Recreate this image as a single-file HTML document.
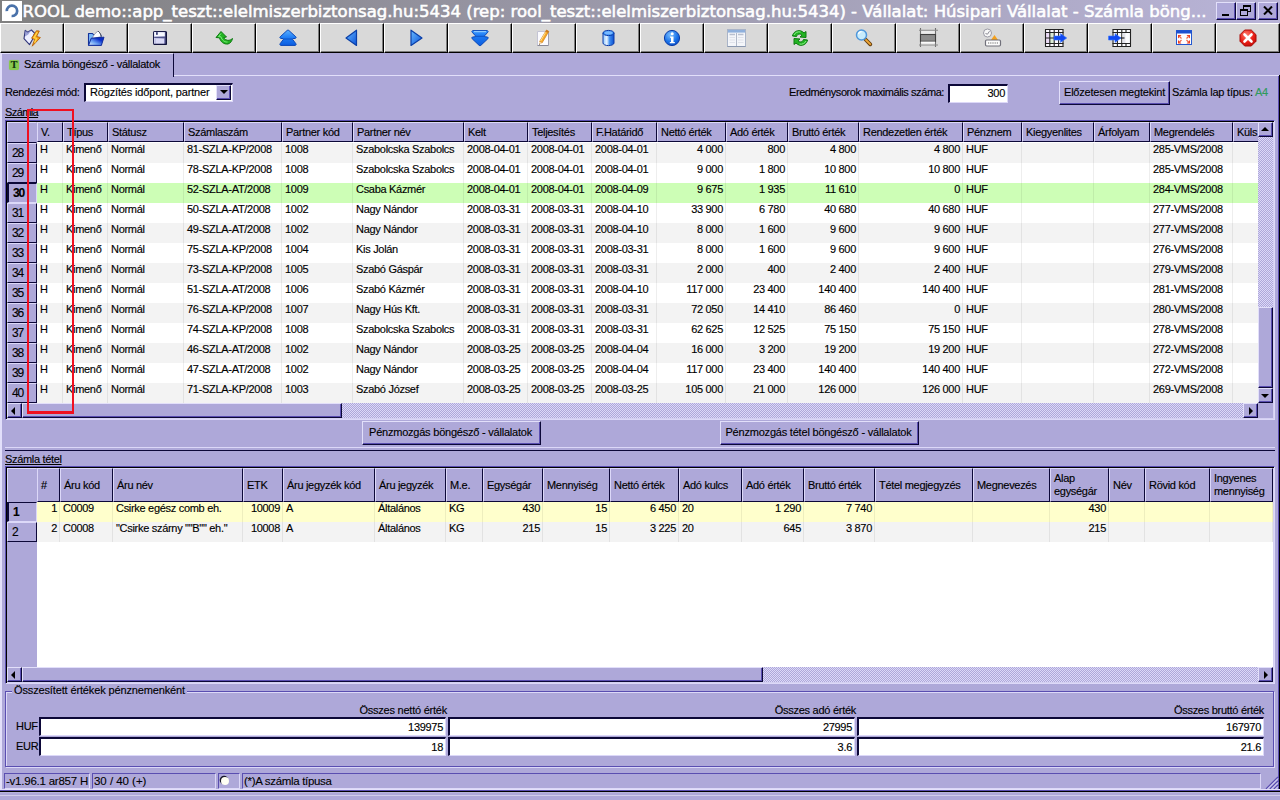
<!DOCTYPE html>
<html lang="hu"><head><meta charset="utf-8"><title>ROOL demo - Számla böngésző</title>
<style>
html,body{margin:0;padding:0}
body{width:1280px;height:800px;overflow:hidden;background:#aea8d9;font:11px "Liberation Sans",sans-serif;letter-spacing:-0.3px;color:#000;position:relative;-webkit-text-stroke-width:0.14px}
div,span{box-sizing:border-box}
.a{position:absolute;white-space:nowrap}
.t{position:absolute;white-space:nowrap;line-height:13px;height:13px}
#title{left:0;top:0;width:1280px;height:23px;background:linear-gradient(90deg,#808080 0,#b9b4d8 100%)}
#ttext{left:22.5px;top:-0.5px;color:#fff;-webkit-text-stroke-width:0.55px;font:16.5px "DejaVu Sans","Liberation Sans",sans-serif;letter-spacing:0;line-height:23px}
.tb{top:23px;width:64px;height:30px;background:#d9d9d9;border-top:1px solid #fff;border-left:1px solid #fff;border-right:1px solid #000;border-bottom:1px solid #000;box-shadow:inset -1px -1px 0 #7c7c7c}
.tb svg{position:absolute;left:22px;top:4px;width:20px;height:20px}
.cb{top:2px;width:20px;height:18px;background:#aea8d9;border-top:1px solid #e2dffa;border-left:1px solid #e2dffa;border-right:1px solid #0c0838;border-bottom:1px solid #0c0838;box-shadow:inset -1px -1px 0 #5a4eb1}
.btn{background:#aea8d9;border-top:1px solid #e2dffa;border-left:1px solid #e2dffa;border-right:1px solid #0c0838;border-bottom:1px solid #0c0838;box-shadow:inset -1px -1px 0 #5a4eb1;text-align:center}
.sunk{border-top:1px solid #5a4eb1;border-left:1px solid #5a4eb1;border-right:1px solid #dcd8f8;border-bottom:1px solid #dcd8f8}
.grid{border-top:2px solid #0c0838;border-left:2px solid #0c0838;border-right:1px solid #dcd8f8;border-bottom:1px solid #dcd8f8;border-top-color:#0c0838}
.hc{background:#aea8d9;border-left:1px solid #dcd8f8;border-top:1px solid #dcd8f8;border-right:1px solid #0c0838;border-bottom:1px solid #0c0838;overflow:hidden}
.hc span{position:absolute;left:3px;white-space:nowrap;line-height:13px}
.rh{left:7px;width:30px;height:20px;background:#aea8d9;border-left:1px solid #dcd8f8;border-top:1px solid #dcd8f8;border-right:1px solid #0c0838;border-bottom:1px solid #0c0838;font-size:12px;letter-spacing:-1.1px;line-height:14px;padding:2px 0 0 4px}
.rh.sel{font-weight:bold;border-left:2px solid #0c0838;border-top:1px solid #0c0838;border-right:1px solid #dcd8f8;border-bottom:1px solid #dcd8f8;padding-left:4px}
.row{left:37px;height:20px}
.c{position:absolute;top:0;height:20px;line-height:13px;padding:0 2px 0 3px;white-space:nowrap;overflow:hidden;border-right:1px solid rgba(0,0,0,.065)}
.r{text-align:right}
.chk{background-image:repeating-conic-gradient(#aea8d9 0% 25%,#dcd8f8 0% 50%);background-size:2px 2px}
.sbb{background:#aea8d9;border-top:1px solid #e2dffa;border-left:1px solid #e2dffa;border-right:1px solid #0c0838;border-bottom:1px solid #0c0838;box-shadow:inset -1px -1px 0 #5a4eb1}
.inp{background:#fff;height:19px;border-top:2px solid #0c0838;border-left:2px solid #0c0838;border-right:1px solid #dcd8f8;border-bottom:1px solid #dcd8f8;text-align:right;line-height:13px;padding:2px 2px 0 0}
.sp{top:773px;height:16px;border-top:1px solid #5a4eb1;border-left:1px solid #5a4eb1;border-right:1px solid #dcd8f8;border-bottom:1px solid #dcd8f8;font:11.5px "Liberation Sans",sans-serif;line-height:14px;padding-left:1px;overflow:hidden;-webkit-text-stroke-width:0.1px}
.arr{position:absolute;width:0;height:0;border:4px solid transparent}
</style></head>
<body>
<div id="title" class="a"></div>
<div class="a" style="left:2px;top:1px;width:20px;height:20px;background:#fff"><svg width="20" height="20" viewBox="0 0 20 20"><path d="M4.8 10.2 A5.2 5.2 0 1 1 9.6 15" fill="none" stroke="#4a72aa" stroke-width="2.7"/></svg></div>
<div id="ttext" class="a">ROOL demo::app_teszt::elelmiszerbiztonsag.hu:5434 (rep: rool_teszt::elelmiszerbiztonsag.hu:5434) - Vállalat: Húsipari Vállalat - Számla böng...</div>
<div class="a cb" style="left:1216px"><div class="a" style="left:5px;top:11px;width:7px;height:2px;background:#000"></div></div>
<div class="a cb" style="left:1236px"><div class="a" style="left:6px;top:2px;width:8px;height:7px;border:1px solid #000;border-top-width:2px"></div><div class="a" style="left:3px;top:6px;width:8px;height:7px;border:1px solid #000;border-top-width:2px;background:#aea8d9"></div></div>
<div class="a cb" style="left:1258px"><svg class="a" style="left:4px;top:3px" width="10" height="9" viewBox="0 0 10 9"><path d="M1 0.5 L9 8.5 M9 0.5 L1 8.5" stroke="#000" stroke-width="2"/></svg></div>
<div class="a tb" style="left:0px"><svg viewBox="0 0 20 20"><path d="M1 10.6 L2.2 2.4 L4.6 4.3 L8.4 2 L11.6 5.2 L9.2 12 L6.5 16.6 Z" fill="#eceeff" stroke="#30367a" stroke-width="1.1" stroke-linejoin="round"/><path d="M2.2 2.4 L4.6 4.3 L8.4 2 L5.2 6.5 L2 8.5Z" fill="#7f86c8" opacity=".75"/><path d="M13.4 2.8 L16.3 3 L13.6 8.4 L17.4 9.6 L9.2 18.2 L11.6 11.6 L8.6 10.2 Z" fill="#f59c12" stroke="#b86208" stroke-width=".9" stroke-linejoin="round"/><path d="M14.3 4.2 L11 9.6 L13.6 10.4 L11.6 14.6" fill="none" stroke="#ffd84a" stroke-width="1.3"/></svg></div>
<div class="a tb" style="left:64px"><svg viewBox="0 0 20 20"><defs><linearGradient id="gf" x1="0" y1="1" x2="1" y2="0"><stop offset="0" stop-color="#e4f2ff"/><stop offset=".35" stop-color="#6ea6f4"/><stop offset=".7" stop-color="#0c30cc"/><stop offset="1" stop-color="#0a28b4"/></linearGradient></defs><path d="M1.5 5.5 L5.5 5.5 L6.8 7 L14 7 L14 17.3 L1.5 17.3 Z" fill="#79b8fa" stroke="#14339a" stroke-width="1.1" stroke-linejoin="round"/><path d="M5.6 9.2 L8 5.6 L11 3 L13 5 L14.3 8.6 L6 10.5Z" fill="#fbfdff" stroke="#7a7e94" stroke-width=".7"/><path d="M11 3 L13 5 L14.3 8.6" fill="none" stroke="#4a4e60" stroke-width=".9"/><path d="M1.6 17.3 L4.2 10.2 L17 9.2 L14.4 17.3 Z" fill="url(#gf)" stroke="#102c9c" stroke-width="1" stroke-linejoin="round"/></svg></div>
<div class="a tb" style="left:128px"><svg viewBox="0 0 20 20"><defs><linearGradient id="gs" x1="0" y1="0" x2="1" y2="0"><stop offset="0" stop-color="#d4d6f0"/><stop offset=".5" stop-color="#a4a6d4"/><stop offset="1" stop-color="#5c5e98"/></linearGradient></defs><rect x="2.5" y="3.5" width="13" height="13" rx=".6" fill="url(#gs)" stroke="#1a1c48" stroke-width="1"/><rect x="3.4" y="4.2" width="10.4" height="4.2" fill="#f6f8ff"/><rect x="5" y="4.2" width="1.8" height="2.6" fill="#3c4078"/><path d="M3.2 9.4 H14.6" stroke="#50548c" stroke-width="1.2"/><rect x="4.6" y="10.6" width="8.6" height="5.4" fill="#c4c4ec"/><path d="M6 10.8v5M8 10.8v5M10 10.8v5M12 10.8v5" stroke="#f0f0ff" stroke-width="1"/><path d="M15.2 4v12.4 M3 16.3 H15.5" stroke="#12143c" stroke-width="1.3"/></svg></div>
<div class="a tb" style="left:192px"><svg viewBox="0 0 20 20"><path d="M6 3.5 L1 9.5 L4.5 9.8 C5.5 14 9 16.5 13 16 C15.5 15.2 17 13 17.5 10.5 C15.5 12.5 12.5 13 10.5 11.5 C9.5 10.8 9 10 8.7 9.5 L11.5 9 Z" fill="#22b422" stroke="#0e7a12" stroke-width="1" stroke-linejoin="round"/><path d="M6 5.5 L3.5 8.6 L6 8.8 C6.8 12 9.5 14.3 12.5 14" fill="none" stroke="#7cf07c" stroke-width="1"/></svg></div>
<div class="a tb" style="left:256px"><svg viewBox="0 0 20 20"><defs><linearGradient id="gu" x1="0" y1="0" x2="0" y2="1"><stop offset="0" stop-color="#5ab0ff"/><stop offset=".5" stop-color="#1f7cf4"/><stop offset="1" stop-color="#0c5ee0"/></linearGradient></defs><path d="M8.2 2.4 Q9 1.8 9.8 2.4 L16.8 8.8 Q17.6 9.8 16.4 10.4 L13.8 10.6 L13.6 11.4 L16.8 15.6 Q17.6 16.8 16.4 17.4 L1.6 17.4 Q0.4 16.8 1.2 15.6 L4.4 11.4 L4.2 10.6 L1.6 10.4 Q0.4 9.8 1.2 8.8 Z" fill="url(#gu)" stroke="#0a48b8" stroke-width="1" stroke-linejoin="round"/><path d="M4.6 11 L13.4 11" stroke="#0a48b8" stroke-width=".8"/></svg></div>
<div class="a tb" style="left:320px"><svg viewBox="0 0 20 20"><defs><linearGradient id="gl" x1="0" y1="0" x2="1" y2="1"><stop offset="0" stop-color="#6abaff"/><stop offset="1" stop-color="#0a52d8"/></linearGradient></defs><path d="M13.5 2.2 L13.5 17.5 L3 10 Z" fill="url(#gl)" stroke="#0a3fa8" stroke-width="1.2" stroke-linejoin="round"/></svg></div>
<div class="a tb" style="left:384px"><svg viewBox="0 0 20 20"><defs><linearGradient id="gr" x1="0" y1="0" x2="1" y2="1"><stop offset="0" stop-color="#6abaff"/><stop offset="1" stop-color="#0a52d8"/></linearGradient></defs><path d="M4 2.2 L4 17.5 L15 10 Z" fill="url(#gr)" stroke="#0a3fa8" stroke-width="1.2" stroke-linejoin="round"/></svg></div>
<div class="a tb" style="left:448px"><svg viewBox="0 0 20 20"><defs><linearGradient id="gd" x1="0" y1="0" x2="0" y2="1"><stop offset="0" stop-color="#3f9cff"/><stop offset=".3" stop-color="#1f7cf4"/><stop offset="1" stop-color="#0c5ee0"/></linearGradient></defs><path d="M1.6 2.6 L16.4 2.6 Q17.6 3.2 16.8 4.2 L13.6 7.8 L13.8 8.8 L16.6 9 Q17.8 9.8 16.8 10.8 L9.8 17.4 Q9 18 8.2 17.4 L1.2 10.8 Q0.2 9.8 1.4 9 L4.2 8.8 L4.4 7.8 L1.2 4.2 Q0.4 3.2 1.6 2.6 Z" fill="url(#gd)" stroke="#0a48b8" stroke-width="1" stroke-linejoin="round"/><path d="M3 3.6 L15 3.6" stroke="#8cc8ff" stroke-width="1.2"/><path d="M4.6 8.3 L13.4 8.3" stroke="#0a48b8" stroke-width=".8"/></svg></div>
<div class="a tb" style="left:512px"><svg viewBox="0 0 20 20"><path d="M2.5 3.5 L13.5 3.5 L13.5 17.5 L2.5 17.5 Z" fill="#fbfbff" stroke="#c4c4d4" stroke-width="1"/><path d="M2.5 17.5 L13.5 17.5" stroke="#8a8a98" stroke-width="1"/><path d="M13.5 3.5 L13.5 17.5" stroke="#a0a0b0" stroke-width="1"/><path d="M11.5 2 L13.8 3.4 L7 15 L4.6 13.6 Z" fill="#f7a92a" stroke="#d0801a" stroke-width=".7"/><path d="M4.6 13.6 L7 15 L4 16.8 Z" fill="#f0d0a0"/><path d="M4.3 15.6 L4 16.8 L5.2 16.2Z" fill="#403020"/><path d="M11.5 2 L13.8 3.4 L13 4.8 L10.7 3.4Z" fill="#c87820"/><path d="M10.5 4.5 L5.6 13" stroke="#ffe090" stroke-width="1"/></svg></div>
<div class="a tb" style="left:576px"><svg viewBox="0 0 20 20"><defs><linearGradient id="gc" x1="0" y1="0" x2="1" y2="0"><stop offset="0" stop-color="#8fc6ff"/><stop offset=".35" stop-color="#e8f4ff"/><stop offset=".6" stop-color="#3f8df0"/><stop offset="1" stop-color="#0c4fd0"/></linearGradient></defs><path d="M4 5 L4 15 A5.5 2.6 0 0 0 15 15 L15 5 Z" fill="url(#gc)" stroke="#0a3aa8" stroke-width="1"/><ellipse cx="9.5" cy="5" rx="5.5" ry="2.6" fill="#3f94f6" stroke="#0a3aa8" stroke-width="1"/><ellipse cx="9.5" cy="4.8" rx="3.8" ry="1.5" fill="#78b8ff"/></svg></div>
<div class="a tb" style="left:640px"><svg viewBox="0 0 20 20"><defs><radialGradient id="gi" cx=".4" cy=".3" r=".8"><stop offset="0" stop-color="#7cc0ff"/><stop offset=".6" stop-color="#1870e8"/><stop offset="1" stop-color="#0a44b8"/></radialGradient></defs><circle cx="9" cy="10" r="7.6" fill="url(#gi)" stroke="#0a3ca8" stroke-width="1"/><circle cx="9.2" cy="5.8" r="1.5" fill="#fff"/><path d="M7 8.5 L10.5 8.5 L10.5 14 L11.8 14 L11.8 15.3 L6.8 15.3 L6.8 14 L8 14 L8 9.8 L7 9.8Z" fill="#fff"/></svg></div>
<div class="a tb" style="left:704px"><svg viewBox="0 0 20 20"><rect x="0.5" y="1.5" width="18" height="17" fill="#f4f6fa" stroke="#a9b4c8" stroke-width="1"/><rect x="1" y="2" width="17" height="2.6" fill="#8fb0dc"/><path d="M9.5 5 V18" stroke="#b0b8c8" stroke-width="1"/><path d="M2.5 6.5 H8 M11 6.5 H16.5" stroke="#b8c0d0" stroke-width="1.4"/><path d="M2.5 9.5 H8 M11 9.5 H16.5 M2.5 12 H8 M11 12 H16.5 M2.5 14.5 H8 M11 14.5 H16.5" stroke="#dfe2ea" stroke-width="1"/><path d="M0.5 18.5 H18.5" stroke="#8a98b0" stroke-width="1"/></svg></div>
<div class="a tb" style="left:768px"><svg viewBox="0 0 20 20"><path d="M1.5 8 C2 4.5 5.5 2 9.5 2.8 C11 3.2 12.2 4 13 5 L15 3.5 L15 9.5 L9 9 L11 7.2 C9.5 5.5 6.5 5.5 5.5 8.5 Z" fill="#22b422" stroke="#0e7a12" stroke-width="1" stroke-linejoin="round"/><path d="M16.5 12 C16 15.5 12.5 18 8.5 17.2 C7 16.8 5.8 16 5 15 L3 16.5 L3 10.5 L9 11 L7 12.8 C8.5 14.5 11.5 14.5 12.5 11.5 Z" fill="#22b422" stroke="#0e7a12" stroke-width="1" stroke-linejoin="round"/><path d="M3 7 C4 4.5 7 3.3 9.5 4" fill="none" stroke="#8af08a" stroke-width="1"/><path d="M15 13 C14 15.5 11 16.7 8.5 16" fill="none" stroke="#8af08a" stroke-width="1"/></svg></div>
<div class="a tb" style="left:832px"><svg viewBox="0 0 20 20"><path d="M10.5 11.5 L15.3 16.3" stroke="#6a4210" stroke-width="3.8" stroke-linecap="round"/><path d="M11 12 L15.2 16.2" stroke="#f0a838" stroke-width="1.8" stroke-linecap="round"/><circle cx="6.5" cy="7" r="5" fill="#c8ecfc" stroke="#4f98dc" stroke-width="1.5"/><path d="M3.4 6 A3.4 3.4 0 0 1 6.6 3.6" fill="none" stroke="#fff" stroke-width="1.3"/></svg></div>
<div class="a tb" style="left:896px"><svg viewBox="0 0 20 20"><rect x="1.5" y="2.5" width="15" height="14.5" fill="#ececec"/><path d="M1.5 0 V19 M16.5 0 V19" stroke="#707070" stroke-width="1.1"/><path d="M-1 2.3 H19 M-1 17 H19" stroke="#8a8a8a" stroke-width="1.1"/><rect x="1.5" y="6.5" width="15" height="6.8" fill="#8c8c8c" stroke="#404040" stroke-width="1.1"/><path d="M2 14.2 H16" stroke="#fff" stroke-width="1.2"/></svg></div>
<div class="a tb" style="left:960px"><svg viewBox="0 0 20 20"><circle cx="4.5" cy="5" r="4" fill="#f8f8f8" stroke="#9a9aa4" stroke-width="1"/><path d="M2.5 5.5 L4.5 6.2 L6.5 3.2" fill="none" stroke="#8a8a94" stroke-width="1"/><path d="M8 12 L11.5 7 L15 12 Z" fill="#f4a01c"/><rect x="2.5" y="12" width="15" height="6" rx="1.2" fill="#fcfcfc" stroke="#70707a" stroke-width="1.2"/><path d="M5 15 H15" stroke="#9a9a9a" stroke-width="1.6" stroke-dasharray="1.2 1"/></svg></div>
<div class="a tb" style="left:1024px"><svg viewBox="0 0 20 20" style="left:19px;overflow:visible"><rect x="1" y="1.5" width="18" height="17" fill="#fdfaff"/><rect x="1.5" y="5" width="4" height="10" fill="#ecdcf6"/><rect x="6" y="5" width="3.6" height="10" fill="#dcecd4"/><path d="M1 1.5 H19.5 M1 4.5 H19.5 M1 10 H19.5 M1 15.5 H19.5 M1 18.5 H19.5" stroke="#222" stroke-width="1.1"/><path d="M1.5 1.5 V18.5 M5.8 1.5 V18.5 M10.2 1.5 V18.5 M14.6 1.5 V18.5 M19 1.5 V18.5" stroke="#222" stroke-width="1.1"/><path d="M10 8 H16.5 V5.6 L22.8 10 L16.5 14.4 V12 H10 Z" fill="#1048f0" stroke="#3a78ff" stroke-width=".6"/></svg></div>
<div class="a tb" style="left:1088px"><svg viewBox="0 0 20 20" style="overflow:visible"><rect x="1.5" y="1.5" width="18" height="17" fill="#fdfdff"/><path d="M1.5 1.5 H20 M1.5 4.5 H20 M1.5 10 H11 M1.5 15.5 H20 M1.5 18.5 H20" stroke="#222" stroke-width="1.1"/><path d="M2 1.5 V18.5 M6.4 1.5 V18.5 M10.8 1.5 V18.5 M15 1.5 V4.5 M15 15.5 V18.5 M19.5 1.5 V18.5" stroke="#222" stroke-width="1.1"/><rect x="11.4" y="5.2" width="3" height="9.8" fill="#e4e4ec"/><path d="M-2.5 8 H4 V5.6 L10 10 L4 14.4 V12 H-2.5 Z" fill="#1048f0" stroke="#3a78ff" stroke-width=".6"/><path d="M10.5 10 H13.5" stroke="#222" stroke-width="1.2"/></svg></div>
<div class="a tb" style="left:1152px"><svg viewBox="0 0 20 20"><rect x="1.5" y="2.5" width="15" height="14" fill="#fdfdff" stroke="#2458d0" stroke-width="1"/><rect x="1.5" y="2.5" width="15" height="3" fill="#1c50d0"/><path d="M3 7 L6.5 7 L3 10.5Z M15 7 L11.5 7 L15 10.5Z M3 15.5 L6.5 15.5 L3 12Z M15 15.5 L11.5 15.5 L15 12Z" fill="#f03818"/><path d="M4 8 L6.5 10.5 M14 8 L11.5 10.5 M4 14.5 L6.5 12 M14 14.5 L11.5 12" stroke="#f06848" stroke-width="1.2"/></svg></div>
<div class="a tb" style="left:1216px"><svg viewBox="0 0 20 20"><defs><radialGradient id="gx" cx=".4" cy=".3" r=".8"><stop offset="0" stop-color="#ff7a6a"/><stop offset=".6" stop-color="#e81c14"/><stop offset="1" stop-color="#b80c08"/></radialGradient></defs><path d="M5.7 2 L12.3 2 L17 6.7 L17 13.3 L12.3 18 L5.7 18 L1 13.3 L1 6.7 Z" fill="url(#gx)" stroke="#a80c08" stroke-width="1"/><path d="M5.5 6.5 L12.5 13.5 M12.5 6.5 L5.5 13.5" stroke="#fff" stroke-width="2.6" stroke-linecap="round"/></svg>
</div>
<div class="a" style="left:0;top:53px;width:174px;height:24px;border-top:1px solid #e2dffa;border-left:2px solid #e2dffa;border-right:1px solid #0c0838;background:#aea8d9"></div>
<div class="a" style="left:174px;top:75px;width:1105px;height:1px;background:#e2dffa"></div>
<div class="a" style="left:0;top:76px;width:2px;height:714px;background:#e2dffa"></div>
<div class="a" style="left:1278px;top:76px;width:1px;height:714px;background:#5a4eb1"></div>
<div class="a" style="left:1279px;top:75px;width:1px;height:716px;background:#000"></div>
<div class="a" style="left:9px;top:60px;width:10px;height:10px;background:#88c850;border-radius:2px;box-shadow:0 0 1px #88c850;font:bold 10px 'Liberation Serif',serif;letter-spacing:0;line-height:10px;text-align:center;color:#0c300c">T</div>
<div class="t" id="tabtxt" style="letter-spacing:-0.253px;left:24px;top:58px">Számla böngésző - vállalatok</div>
<div class="t" id="l_rend" style="letter-spacing:-0.364px;left:5px;top:86px">Rendezési mód:</div>
<div class="a" style="left:84px;top:83px;width:149px;height:19px;background:#fff;border-top:2px solid #0c0838;border-left:2px solid #0c0838;border-right:1px solid #dcd8f8;border-bottom:1px solid #dcd8f8"></div>
<div class="t" id="l_combo" style="letter-spacing:-0.160px;left:90px;top:86px">Rögzítés időpont, partner</div>
<div class="a sbb" style="left:216px;top:85px;width:15px;height:15px"><div class="arr" style="left:3px;top:4px;border-top-color:#000;border-bottom-width:0"></div></div>
<div class="t" id="l_eredm" style="letter-spacing:-0.417px;left:789px;top:86px">Eredménysorok maximális száma:</div>
<div class="a inp" style="left:948px;top:84px;width:60px;height:19px;padding-top:1px">300</div>
<div class="a btn" style="letter-spacing:-0.210px;left:1059px;top:81px;width:111px;height:24px;line-height:13px;padding-top:4px" id="b_elo">Előzetesen megtekint</div>
<div class="t" id="l_lap" style="letter-spacing:-0.215px;left:1172px;top:86px">Számla lap típus: <span style="color:#2e9a5c">A4</span></div>
<div class="t" id="l_szamla" style="letter-spacing:-0.600px;left:5px;top:106px;text-decoration:underline">Számla</div>
<div class="a" style="left:5px;top:120px;width:1270px;height:300px;border-top:1px solid #5a4eb1;border-left:1px solid #5a4eb1;border-right:1px solid #dcd8f8;border-bottom:1px solid #dcd8f8;box-shadow:inset 1px 1px 0 #000,inset -1px -1px 0 #d4d0f2;background:#fff"></div>
<div class="a" style="left:7px;top:122px;width:30px;height:281px;background:#aea8d9"></div>
<div class="a hc" style="left:7px;top:122px;width:30px;height:21px;border-right-color:#aea8d9"></div>
<div class="a" style="left:37px;top:122px;width:1221px;height:20px;overflow:hidden">
<div class="a hc" style="left:0px;top:0;width:26px;height:20px"><span style="top:3px">V.</span></div><div class="a hc" style="left:26px;top:0;width:45px;height:20px"><span style="top:3px">Típus</span></div><div class="a hc" style="left:71px;top:0;width:76px;height:20px"><span style="top:3px">Státusz</span></div><div class="a hc" style="left:147px;top:0;width:98px;height:20px"><span style="top:3px">Számlaszám</span></div><div class="a hc" style="left:245px;top:0;width:71px;height:20px"><span style="top:3px">Partner kód</span></div><div class="a hc" style="left:316px;top:0;width:111px;height:20px"><span style="top:3px">Partner név</span></div><div class="a hc" style="left:427px;top:0;width:64px;height:20px"><span style="top:3px">Kelt</span></div><div class="a hc" style="left:491px;top:0;width:64px;height:20px"><span style="top:3px">Teljesítés</span></div><div class="a hc" style="left:555px;top:0;width:65px;height:20px"><span style="top:3px">F.Határidő</span></div><div class="a hc" style="left:620px;top:0;width:69px;height:20px"><span style="top:3px">Nettó érték</span></div><div class="a hc" style="left:689px;top:0;width:62px;height:20px"><span style="top:3px">Adó érték</span></div><div class="a hc" style="left:751px;top:0;width:71px;height:20px"><span style="top:3px">Bruttó érték</span></div><div class="a hc" style="left:822px;top:0;width:104px;height:20px"><span style="top:3px">Rendezetlen érték</span></div><div class="a hc" style="left:926px;top:0;width:59px;height:20px"><span style="top:3px">Pénznem</span></div><div class="a hc" style="left:985px;top:0;width:72px;height:20px"><span style="top:3px">Kiegyenlites</span></div><div class="a hc" style="left:1057px;top:0;width:56px;height:20px"><span style="top:3px">Árfolyam</span></div><div class="a hc" style="left:1113px;top:0;width:83px;height:20px"><span style="top:3px">Megrendelés</span></div><div class="a hc" style="left:1196px;top:0;width:68px;height:20px"><span style="top:3px">Küls</span></div>
</div>
<div class="a rh" style="top:143px">28</div><div class="a row" style="top:143px;width:1221px;background:#f3f3f3;overflow:hidden"><div class="c" style="left:0px;width:26px">H</div><div class="c" style="left:26px;width:45px">Kimenő</div><div class="c" style="left:71px;width:76px">Normál</div><div class="c" style="left:147px;width:98px">81-SZLA-KP/2008</div><div class="c" style="left:245px;width:71px">1008</div><div class="c" style="left:316px;width:111px">Szabolcska Szabolcs</div><div class="c" style="left:427px;width:64px">2008-04-01</div><div class="c" style="left:491px;width:64px">2008-04-01</div><div class="c" style="left:555px;width:65px">2008-04-01</div><div class="c r" style="left:620px;width:69px">4 000</div><div class="c r" style="left:689px;width:62px">800</div><div class="c r" style="left:751px;width:71px">4 800</div><div class="c r" style="left:822px;width:104px">4 800</div><div class="c" style="left:926px;width:59px">HUF</div><div class="c" style="left:985px;width:72px"></div><div class="c" style="left:1057px;width:56px"></div><div class="c" style="left:1113px;width:83px">285-VMS/2008</div><div class="c" style="left:1196px;width:68px"></div></div>
<div class="a rh" style="top:163px">29</div><div class="a row" style="top:163px;width:1221px;background:#ffffff;overflow:hidden"><div class="c" style="left:0px;width:26px">H</div><div class="c" style="left:26px;width:45px">Kimenő</div><div class="c" style="left:71px;width:76px">Normál</div><div class="c" style="left:147px;width:98px">78-SZLA-KP/2008</div><div class="c" style="left:245px;width:71px">1008</div><div class="c" style="left:316px;width:111px">Szabolcska Szabolcs</div><div class="c" style="left:427px;width:64px">2008-04-01</div><div class="c" style="left:491px;width:64px">2008-04-01</div><div class="c" style="left:555px;width:65px">2008-04-01</div><div class="c r" style="left:620px;width:69px">9 000</div><div class="c r" style="left:689px;width:62px">1 800</div><div class="c r" style="left:751px;width:71px">10 800</div><div class="c r" style="left:822px;width:104px">10 800</div><div class="c" style="left:926px;width:59px">HUF</div><div class="c" style="left:985px;width:72px"></div><div class="c" style="left:1057px;width:56px"></div><div class="c" style="left:1113px;width:83px">285-VMS/2008</div><div class="c" style="left:1196px;width:68px"></div></div>
<div class="a rh sel" style="top:183px">30</div><div class="a row" style="top:183px;width:1221px;background:#cdfeb6;overflow:hidden"><div class="c" style="left:0px;width:26px">H</div><div class="c" style="left:26px;width:45px">Kimenő</div><div class="c" style="left:71px;width:76px">Normál</div><div class="c" style="left:147px;width:98px">52-SZLA-AT/2008</div><div class="c" style="left:245px;width:71px">1009</div><div class="c" style="left:316px;width:111px">Csaba Kázmér</div><div class="c" style="left:427px;width:64px">2008-04-01</div><div class="c" style="left:491px;width:64px">2008-04-01</div><div class="c" style="left:555px;width:65px">2008-04-09</div><div class="c r" style="left:620px;width:69px">9 675</div><div class="c r" style="left:689px;width:62px">1 935</div><div class="c r" style="left:751px;width:71px">11 610</div><div class="c r" style="left:822px;width:104px">0</div><div class="c" style="left:926px;width:59px">HUF</div><div class="c" style="left:985px;width:72px"></div><div class="c" style="left:1057px;width:56px"></div><div class="c" style="left:1113px;width:83px">284-VMS/2008</div><div class="c" style="left:1196px;width:68px"></div></div>
<div class="a rh" style="top:203px">31</div><div class="a row" style="top:203px;width:1221px;background:#ffffff;overflow:hidden"><div class="c" style="left:0px;width:26px">H</div><div class="c" style="left:26px;width:45px">Kimenő</div><div class="c" style="left:71px;width:76px">Normál</div><div class="c" style="left:147px;width:98px">50-SZLA-AT/2008</div><div class="c" style="left:245px;width:71px">1002</div><div class="c" style="left:316px;width:111px">Nagy Nándor</div><div class="c" style="left:427px;width:64px">2008-03-31</div><div class="c" style="left:491px;width:64px">2008-03-31</div><div class="c" style="left:555px;width:65px">2008-04-10</div><div class="c r" style="left:620px;width:69px">33 900</div><div class="c r" style="left:689px;width:62px">6 780</div><div class="c r" style="left:751px;width:71px">40 680</div><div class="c r" style="left:822px;width:104px">40 680</div><div class="c" style="left:926px;width:59px">HUF</div><div class="c" style="left:985px;width:72px"></div><div class="c" style="left:1057px;width:56px"></div><div class="c" style="left:1113px;width:83px">277-VMS/2008</div><div class="c" style="left:1196px;width:68px"></div></div>
<div class="a rh" style="top:223px">32</div><div class="a row" style="top:223px;width:1221px;background:#f3f3f3;overflow:hidden"><div class="c" style="left:0px;width:26px">H</div><div class="c" style="left:26px;width:45px">Kimenő</div><div class="c" style="left:71px;width:76px">Normál</div><div class="c" style="left:147px;width:98px">49-SZLA-AT/2008</div><div class="c" style="left:245px;width:71px">1002</div><div class="c" style="left:316px;width:111px">Nagy Nándor</div><div class="c" style="left:427px;width:64px">2008-03-31</div><div class="c" style="left:491px;width:64px">2008-03-31</div><div class="c" style="left:555px;width:65px">2008-04-10</div><div class="c r" style="left:620px;width:69px">8 000</div><div class="c r" style="left:689px;width:62px">1 600</div><div class="c r" style="left:751px;width:71px">9 600</div><div class="c r" style="left:822px;width:104px">9 600</div><div class="c" style="left:926px;width:59px">HUF</div><div class="c" style="left:985px;width:72px"></div><div class="c" style="left:1057px;width:56px"></div><div class="c" style="left:1113px;width:83px">277-VMS/2008</div><div class="c" style="left:1196px;width:68px"></div></div>
<div class="a rh" style="top:243px">33</div><div class="a row" style="top:243px;width:1221px;background:#ffffff;overflow:hidden"><div class="c" style="left:0px;width:26px">H</div><div class="c" style="left:26px;width:45px">Kimenő</div><div class="c" style="left:71px;width:76px">Normál</div><div class="c" style="left:147px;width:98px">75-SZLA-KP/2008</div><div class="c" style="left:245px;width:71px">1004</div><div class="c" style="left:316px;width:111px">Kis Jolán</div><div class="c" style="left:427px;width:64px">2008-03-31</div><div class="c" style="left:491px;width:64px">2008-03-31</div><div class="c" style="left:555px;width:65px">2008-03-31</div><div class="c r" style="left:620px;width:69px">8 000</div><div class="c r" style="left:689px;width:62px">1 600</div><div class="c r" style="left:751px;width:71px">9 600</div><div class="c r" style="left:822px;width:104px">9 600</div><div class="c" style="left:926px;width:59px">HUF</div><div class="c" style="left:985px;width:72px"></div><div class="c" style="left:1057px;width:56px"></div><div class="c" style="left:1113px;width:83px">276-VMS/2008</div><div class="c" style="left:1196px;width:68px"></div></div>
<div class="a rh" style="top:263px">34</div><div class="a row" style="top:263px;width:1221px;background:#f3f3f3;overflow:hidden"><div class="c" style="left:0px;width:26px">H</div><div class="c" style="left:26px;width:45px">Kimenő</div><div class="c" style="left:71px;width:76px">Normál</div><div class="c" style="left:147px;width:98px">73-SZLA-KP/2008</div><div class="c" style="left:245px;width:71px">1005</div><div class="c" style="left:316px;width:111px">Szabó Gáspár</div><div class="c" style="left:427px;width:64px">2008-03-31</div><div class="c" style="left:491px;width:64px">2008-03-31</div><div class="c" style="left:555px;width:65px">2008-03-31</div><div class="c r" style="left:620px;width:69px">2 000</div><div class="c r" style="left:689px;width:62px">400</div><div class="c r" style="left:751px;width:71px">2 400</div><div class="c r" style="left:822px;width:104px">2 400</div><div class="c" style="left:926px;width:59px">HUF</div><div class="c" style="left:985px;width:72px"></div><div class="c" style="left:1057px;width:56px"></div><div class="c" style="left:1113px;width:83px">279-VMS/2008</div><div class="c" style="left:1196px;width:68px"></div></div>
<div class="a rh" style="top:283px">35</div><div class="a row" style="top:283px;width:1221px;background:#ffffff;overflow:hidden"><div class="c" style="left:0px;width:26px">H</div><div class="c" style="left:26px;width:45px">Kimenő</div><div class="c" style="left:71px;width:76px">Normál</div><div class="c" style="left:147px;width:98px">51-SZLA-AT/2008</div><div class="c" style="left:245px;width:71px">1006</div><div class="c" style="left:316px;width:111px">Szabó Kázmér</div><div class="c" style="left:427px;width:64px">2008-03-31</div><div class="c" style="left:491px;width:64px">2008-03-31</div><div class="c" style="left:555px;width:65px">2008-04-10</div><div class="c r" style="left:620px;width:69px">117 000</div><div class="c r" style="left:689px;width:62px">23 400</div><div class="c r" style="left:751px;width:71px">140 400</div><div class="c r" style="left:822px;width:104px">140 400</div><div class="c" style="left:926px;width:59px">HUF</div><div class="c" style="left:985px;width:72px"></div><div class="c" style="left:1057px;width:56px"></div><div class="c" style="left:1113px;width:83px">281-VMS/2008</div><div class="c" style="left:1196px;width:68px"></div></div>
<div class="a rh" style="top:303px">36</div><div class="a row" style="top:303px;width:1221px;background:#f3f3f3;overflow:hidden"><div class="c" style="left:0px;width:26px">H</div><div class="c" style="left:26px;width:45px">Kimenő</div><div class="c" style="left:71px;width:76px">Normál</div><div class="c" style="left:147px;width:98px">76-SZLA-KP/2008</div><div class="c" style="left:245px;width:71px">1007</div><div class="c" style="left:316px;width:111px">Nagy Hús Kft.</div><div class="c" style="left:427px;width:64px">2008-03-31</div><div class="c" style="left:491px;width:64px">2008-03-31</div><div class="c" style="left:555px;width:65px">2008-03-31</div><div class="c r" style="left:620px;width:69px">72 050</div><div class="c r" style="left:689px;width:62px">14 410</div><div class="c r" style="left:751px;width:71px">86 460</div><div class="c r" style="left:822px;width:104px">0</div><div class="c" style="left:926px;width:59px">HUF</div><div class="c" style="left:985px;width:72px"></div><div class="c" style="left:1057px;width:56px"></div><div class="c" style="left:1113px;width:83px">280-VMS/2008</div><div class="c" style="left:1196px;width:68px"></div></div>
<div class="a rh" style="top:323px">37</div><div class="a row" style="top:323px;width:1221px;background:#ffffff;overflow:hidden"><div class="c" style="left:0px;width:26px">H</div><div class="c" style="left:26px;width:45px">Kimenő</div><div class="c" style="left:71px;width:76px">Normál</div><div class="c" style="left:147px;width:98px">74-SZLA-KP/2008</div><div class="c" style="left:245px;width:71px">1008</div><div class="c" style="left:316px;width:111px">Szabolcska Szabolcs</div><div class="c" style="left:427px;width:64px">2008-03-31</div><div class="c" style="left:491px;width:64px">2008-03-31</div><div class="c" style="left:555px;width:65px">2008-03-31</div><div class="c r" style="left:620px;width:69px">62 625</div><div class="c r" style="left:689px;width:62px">12 525</div><div class="c r" style="left:751px;width:71px">75 150</div><div class="c r" style="left:822px;width:104px">75 150</div><div class="c" style="left:926px;width:59px">HUF</div><div class="c" style="left:985px;width:72px"></div><div class="c" style="left:1057px;width:56px"></div><div class="c" style="left:1113px;width:83px">278-VMS/2008</div><div class="c" style="left:1196px;width:68px"></div></div>
<div class="a rh" style="top:343px">38</div><div class="a row" style="top:343px;width:1221px;background:#f3f3f3;overflow:hidden"><div class="c" style="left:0px;width:26px">H</div><div class="c" style="left:26px;width:45px">Kimenő</div><div class="c" style="left:71px;width:76px">Normál</div><div class="c" style="left:147px;width:98px">46-SZLA-AT/2008</div><div class="c" style="left:245px;width:71px">1002</div><div class="c" style="left:316px;width:111px">Nagy Nándor</div><div class="c" style="left:427px;width:64px">2008-03-25</div><div class="c" style="left:491px;width:64px">2008-03-25</div><div class="c" style="left:555px;width:65px">2008-04-04</div><div class="c r" style="left:620px;width:69px">16 000</div><div class="c r" style="left:689px;width:62px">3 200</div><div class="c r" style="left:751px;width:71px">19 200</div><div class="c r" style="left:822px;width:104px">19 200</div><div class="c" style="left:926px;width:59px">HUF</div><div class="c" style="left:985px;width:72px"></div><div class="c" style="left:1057px;width:56px"></div><div class="c" style="left:1113px;width:83px">272-VMS/2008</div><div class="c" style="left:1196px;width:68px"></div></div>
<div class="a rh" style="top:363px">39</div><div class="a row" style="top:363px;width:1221px;background:#ffffff;overflow:hidden"><div class="c" style="left:0px;width:26px">H</div><div class="c" style="left:26px;width:45px">Kimenő</div><div class="c" style="left:71px;width:76px">Normál</div><div class="c" style="left:147px;width:98px">47-SZLA-AT/2008</div><div class="c" style="left:245px;width:71px">1002</div><div class="c" style="left:316px;width:111px">Nagy Nándor</div><div class="c" style="left:427px;width:64px">2008-03-25</div><div class="c" style="left:491px;width:64px">2008-03-25</div><div class="c" style="left:555px;width:65px">2008-04-04</div><div class="c r" style="left:620px;width:69px">117 000</div><div class="c r" style="left:689px;width:62px">23 400</div><div class="c r" style="left:751px;width:71px">140 400</div><div class="c r" style="left:822px;width:104px">140 400</div><div class="c" style="left:926px;width:59px">HUF</div><div class="c" style="left:985px;width:72px"></div><div class="c" style="left:1057px;width:56px"></div><div class="c" style="left:1113px;width:83px">272-VMS/2008</div><div class="c" style="left:1196px;width:68px"></div></div>
<div class="a rh" style="top:383px">40</div><div class="a row" style="top:383px;width:1221px;background:#f3f3f3;overflow:hidden"><div class="c" style="left:0px;width:26px">H</div><div class="c" style="left:26px;width:45px">Kimenő</div><div class="c" style="left:71px;width:76px">Normál</div><div class="c" style="left:147px;width:98px">71-SZLA-KP/2008</div><div class="c" style="left:245px;width:71px">1003</div><div class="c" style="left:316px;width:111px">Szabó József</div><div class="c" style="left:427px;width:64px">2008-03-25</div><div class="c" style="left:491px;width:64px">2008-03-25</div><div class="c" style="left:555px;width:65px">2008-03-25</div><div class="c r" style="left:620px;width:69px">105 000</div><div class="c r" style="left:689px;width:62px">21 000</div><div class="c r" style="left:751px;width:71px">126 000</div><div class="c r" style="left:822px;width:104px">126 000</div><div class="c" style="left:926px;width:59px">HUF</div><div class="c" style="left:985px;width:72px"></div><div class="c" style="left:1057px;width:56px"></div><div class="c" style="left:1113px;width:83px">269-VMS/2008</div><div class="c" style="left:1196px;width:68px"></div></div>
<div class="a chk" style="left:1258px;top:122px;width:15px;height:281px"></div>
<div class="a sbb" style="left:1258px;top:122px;width:15px;height:15px"><div class="arr" style="left:2px;top:4px;border-bottom-color:#000;border-top-width:0"></div></div>
<div class="a sbb" style="left:1258px;top:307px;width:15px;height:81px"></div>
<div class="a sbb" style="left:1258px;top:388px;width:15px;height:15px"><div class="arr" style="left:2px;top:5px;border-top-color:#000;border-bottom-width:0"></div></div>
<div class="a chk" style="left:7px;top:403px;width:1251px;height:15px"></div>
<div class="a sbb" style="left:7px;top:403px;width:15px;height:15px"><div class="arr" style="left:3px;top:3px;border-right-color:#000;border-left-width:0"></div></div>
<div class="a sbb" style="left:22px;top:403px;width:320px;height:15px"></div>
<div class="a sbb" style="left:1243px;top:403px;width:15px;height:15px"><div class="arr" style="left:5px;top:3px;border-left-color:#000;border-right-width:0"></div></div>
<div class="a" style="left:1258px;top:403px;width:15px;height:15px;background:#aea8d9"></div>
<div class="a" style="left:27px;top:109px;width:47px;height:305px;border:2px solid #f01020;border-bottom-width:3px"></div>
<div class="a btn" style="letter-spacing:-0.220px;left:362px;top:421px;width:179px;height:24px;line-height:13px;padding:4px 2px 0 0" id="b_p1">Pénzmozgás böngésző - vállalatok</div>
<div class="a btn" style="letter-spacing:-0.206px;left:720px;top:421px;width:199px;height:24px;line-height:13px;padding:4px 2px 0 0" id="b_p2">Pénzmozgás tétel böngésző - vállalatok</div>
<div class="a" style="left:5px;top:447px;width:1270px;height:4px;border-top:1px solid #dcd8f8;border-bottom:1px solid #0c0838"></div>
<div class="t" id="l_tetel" style="letter-spacing:-0.330px;left:5px;top:453px;text-decoration:underline">Számla tétel</div>
<div class="a" style="left:5px;top:466px;width:1270px;height:218px;border-top:1px solid #5a4eb1;border-left:1px solid #5a4eb1;border-right:1px solid #dcd8f8;border-bottom:1px solid #dcd8f8;box-shadow:inset 1px 1px 0 #000,inset -1px -1px 0 #d4d0f2;background:#fff"></div>
<div class="a" style="left:7px;top:468px;width:30px;height:199px;background:#aea8d9"></div>
<div class="a hc" style="left:7px;top:468px;width:30px;height:35px;border-right-color:#aea8d9"></div>
<div class="a hc" style="left:37px;top:468px;width:23px;height:34px"><span style="top:10px">#</span></div><div class="a hc" style="left:60px;top:468px;width:53px;height:34px"><span style="top:10px">Áru kód</span></div><div class="a hc" style="left:113px;top:468px;width:130px;height:34px"><span style="top:10px">Áru név</span></div><div class="a hc" style="left:243px;top:468px;width:40px;height:34px"><span style="top:10px">ETK</span></div><div class="a hc" style="left:283px;top:468px;width:92px;height:34px"><span style="top:10px">Áru jegyzék kód</span></div><div class="a hc" style="left:375px;top:468px;width:71px;height:34px"><span style="top:10px">Áru jegyzék</span></div><div class="a hc" style="left:446px;top:468px;width:37px;height:34px"><span style="top:10px">M.e.</span></div><div class="a hc" style="left:483px;top:468px;width:60px;height:34px"><span style="top:10px">Egységár</span></div><div class="a hc" style="left:543px;top:468px;width:67px;height:34px"><span style="top:10px">Mennyiség</span></div><div class="a hc" style="left:610px;top:468px;width:69px;height:34px"><span style="top:10px">Nettó érték</span></div><div class="a hc" style="left:679px;top:468px;width:63px;height:34px"><span style="top:10px">Adó kulcs</span></div><div class="a hc" style="left:742px;top:468px;width:62px;height:34px"><span style="top:10px">Adó érték</span></div><div class="a hc" style="left:804px;top:468px;width:71px;height:34px"><span style="top:10px">Bruttó érték</span></div><div class="a hc" style="left:875px;top:468px;width:98px;height:34px"><span style="top:10px">Tétel megjegyzés</span></div><div class="a hc" style="left:973px;top:468px;width:77px;height:34px"><span style="top:10px">Megnevezés</span></div><div class="a hc" style="left:1050px;top:468px;width:59px;height:34px"><span style="top:3px">Alap<br>egységár</span></div><div class="a hc" style="left:1109px;top:468px;width:36px;height:34px"><span style="top:10px">Név</span></div><div class="a hc" style="left:1145px;top:468px;width:65px;height:34px"><span style="top:10px">Rövid kód</span></div><div class="a hc" style="left:1210px;top:468px;width:63px;height:34px"><span style="top:3px">Ingyenes<br>mennyiség</span></div>
<div class="a rh sel" style="top:502px">1</div><div class="a row" style="top:502px;width:1236px;background:#ffffcc"><div class="c r" style="left:0px;width:23px">1</div><div class="c" style="left:23px;width:53px">C0009</div><div class="c" style="left:76px;width:130px">Csirke egész comb eh.</div><div class="c r" style="left:206px;width:40px">10009</div><div class="c" style="left:246px;width:92px">A</div><div class="c" style="left:338px;width:71px">Általános</div><div class="c" style="left:409px;width:37px">KG</div><div class="c r" style="left:446px;width:60px">430</div><div class="c r" style="left:506px;width:67px">15</div><div class="c r" style="left:573px;width:69px">6 450</div><div class="c" style="left:642px;width:63px">20</div><div class="c r" style="left:705px;width:62px">1 290</div><div class="c r" style="left:767px;width:71px">7 740</div><div class="c" style="left:838px;width:98px"></div><div class="c" style="left:936px;width:77px"></div><div class="c r" style="left:1013px;width:59px">430</div><div class="c" style="left:1072px;width:36px"></div><div class="c" style="left:1108px;width:65px"></div><div class="c" style="left:1173px;width:63px"></div></div>
<div class="a rh" style="top:522px">2</div><div class="a row" style="top:522px;width:1236px;background:#f3f3f3"><div class="c r" style="left:0px;width:23px">2</div><div class="c" style="left:23px;width:53px">C0008</div><div class="c" style="left:76px;width:130px">&quot;Csirke szárny &quot;&quot;B&quot;&quot; eh.&quot;</div><div class="c r" style="left:206px;width:40px">10008</div><div class="c" style="left:246px;width:92px">A</div><div class="c" style="left:338px;width:71px">Általános</div><div class="c" style="left:409px;width:37px">KG</div><div class="c r" style="left:446px;width:60px">215</div><div class="c r" style="left:506px;width:67px">15</div><div class="c r" style="left:573px;width:69px">3 225</div><div class="c" style="left:642px;width:63px">20</div><div class="c r" style="left:705px;width:62px">645</div><div class="c r" style="left:767px;width:71px">3 870</div><div class="c" style="left:838px;width:98px"></div><div class="c" style="left:936px;width:77px"></div><div class="c r" style="left:1013px;width:59px">215</div><div class="c" style="left:1072px;width:36px"></div><div class="c" style="left:1108px;width:65px"></div><div class="c" style="left:1173px;width:63px"></div></div>
<div class="a chk" style="left:7px;top:667px;width:1266px;height:15px"></div>
<div class="a sbb" style="left:7px;top:667px;width:15px;height:15px"><div class="arr" style="left:3px;top:3px;border-right-color:#000;border-left-width:0"></div></div>
<div class="a sbb" style="left:22px;top:667px;width:741px;height:15px"></div>
<div class="a sbb" style="left:1258px;top:667px;width:15px;height:15px"><div class="arr" style="left:5px;top:3px;border-left-color:#000;border-right-width:0"></div></div>
<div class="a" style="left:5px;top:691px;width:1269px;height:76px;border:1px solid #5a4eb1;box-shadow:inset 1px 1px 0 #dcd8f8,1px 1px 0 #dcd8f8"></div>
<div class="t" id="l_grp" style="letter-spacing:-0.136px;left:12px;top:684px;background:#aea8d9;padding:0 2px">Összesített értékek pénznemenként</div>
<div class="t" id="l_net" style="letter-spacing:-0.230px;right:833px;top:704px">Összes nettó érték</div>
<div class="t" id="l_ado" style="letter-spacing:-0.270px;right:424px;top:704px">Összes adó érték</div>
<div class="t" id="l_bru" style="letter-spacing:-0.280px;right:16px;top:704px">Összes bruttó érték</div>
<div class="t" id="l_huf" style="left:16px;top:720px">HUF</div>
<div class="t" id="l_eur" style="left:16px;top:740px">EUR</div>
<div class="a inp" style="left:39px;top:717px;width:407px">139975</div><div class="a inp" style="left:448px;top:717px;width:407px">27995</div><div class="a inp" style="left:857px;top:717px;width:407px">167970</div>
<div class="a inp" style="left:39px;top:737px;width:407px">18</div><div class="a inp" style="left:448px;top:737px;width:407px">3.6</div><div class="a inp" style="left:857px;top:737px;width:407px">21.6</div>
<div class="a sp" style="left:4px;width:86px;letter-spacing:-0.23px" id="s1">-v1.96.1 ar857 H</div>
<div class="a sp" style="left:92px;width:124px;letter-spacing:-0.03px" id="s2">30 / 40 (+)</div>
<div class="a sp" style="left:218px;width:22px"><div class="a" style="left:2px;top:3px;width:8px;height:8px;border-radius:4px;background:#fffff4;box-shadow:-1px -1px 0 0.3px #181828"></div></div>
<div class="a sp" style="left:242px;width:1019px;letter-spacing:-0.32px" id="s4">(*)A számla típusa</div>
<svg class="a" style="left:1265px;top:776px" width="14" height="14" viewBox="0 0 14 14"><path d="M13 1L1 13M13 5L5 13M13 9L9 13" stroke="#5a4eb1" stroke-width="1.3"/><path d="M13 2.5L2.5 13M13 6.5L6.5 13M13 10.5L10.5 13" stroke="#e2dffa" stroke-width="1"/></svg>
<div class="a" style="left:0;top:789px;width:1280px;height:1px;background:#e2dffa"></div>
<div class="a" style="left:0;top:790px;width:1280px;height:1px;background:#5a4eb1"></div>
<div class="a" style="left:0;top:791px;width:1280px;height:1px;background:#000"></div>
<div class="a" style="left:0;top:792px;width:1280px;height:8px;background:#aea8d9;border-top:1px solid #b8b3de"></div>
<div class="a" style="left:0;top:795px;width:1280px;height:1px;background:#d0ccea"></div>
</body></html>
